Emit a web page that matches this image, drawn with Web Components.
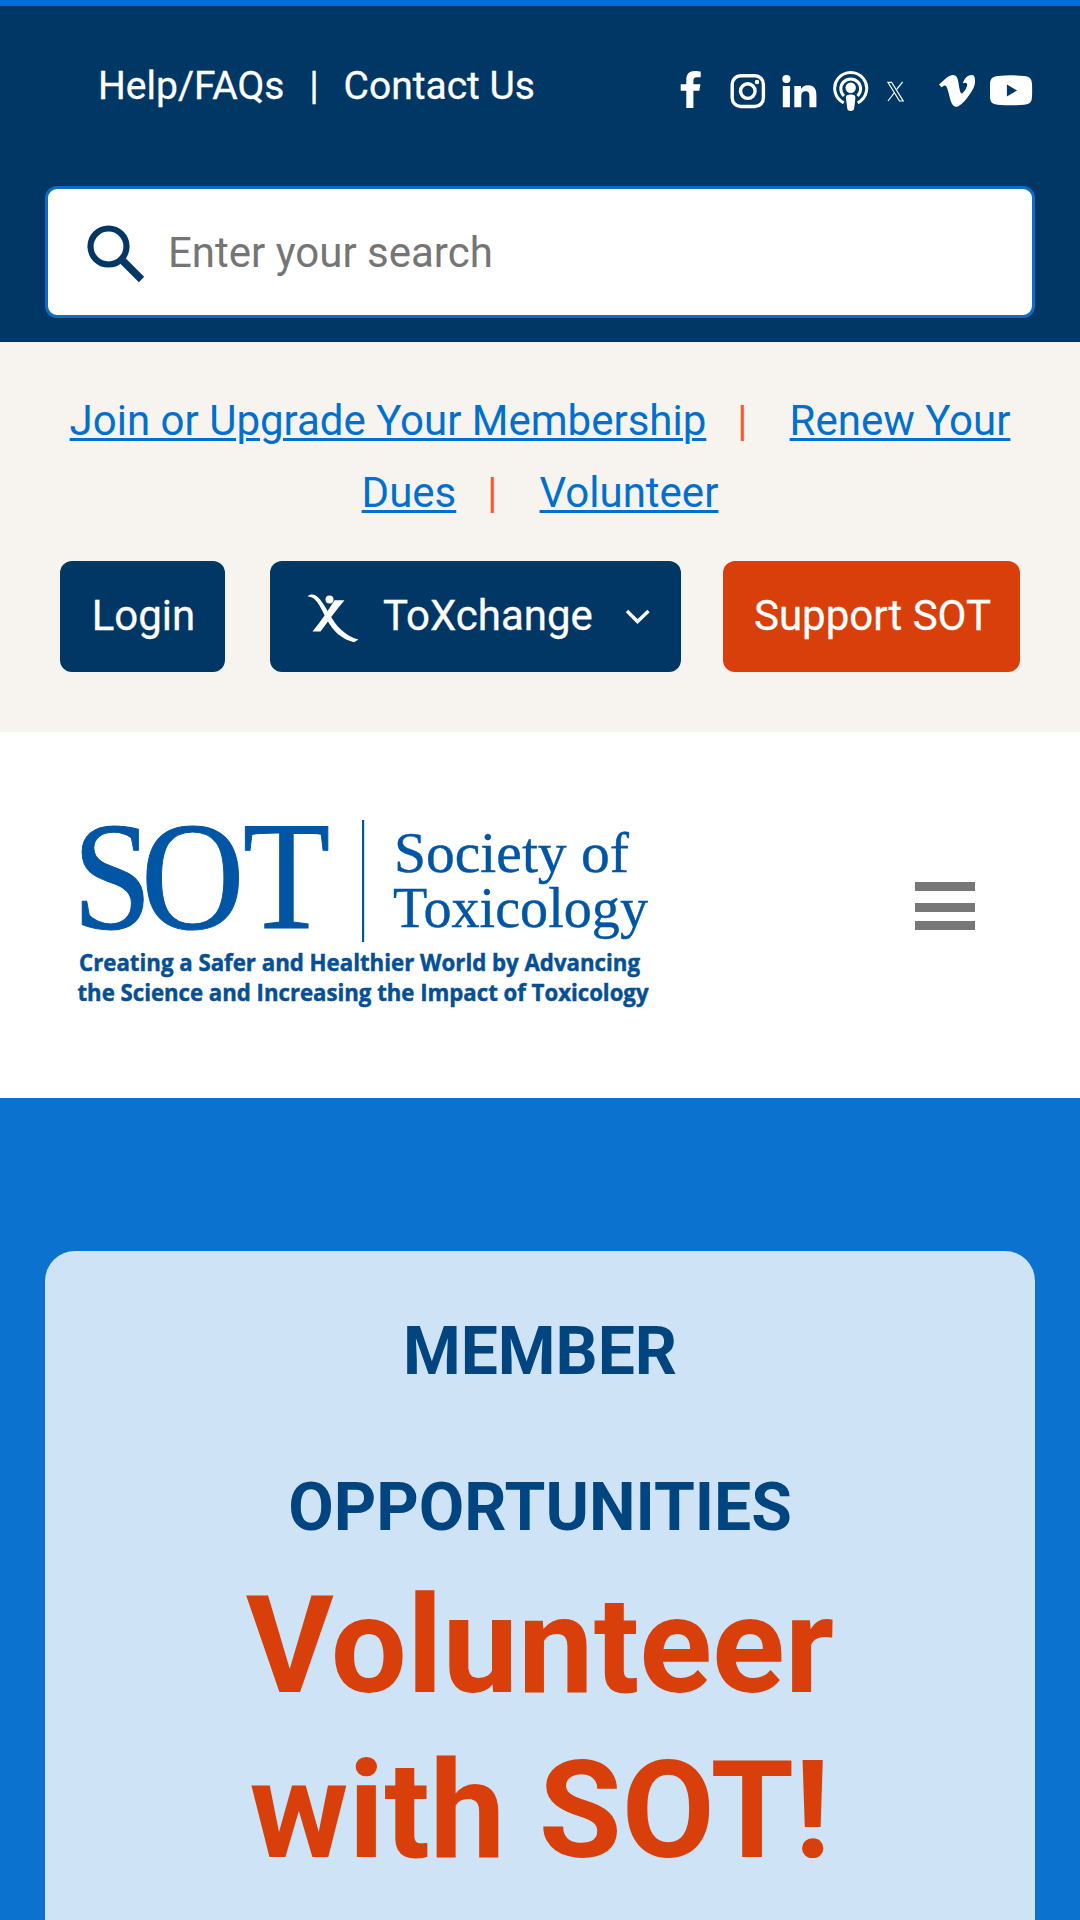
<!DOCTYPE html>
<html lang="en">
<head>
<meta charset="utf-8">
<title>Society of Toxicology</title>
<style>
  html, body { margin: 0; background: #fff; font-family: Roboto, "Liberation Sans", sans-serif; }
  body { width: 1080px; height: 1920px; overflow: hidden; }
</style>
</head>
<body>
<sot-page>
  <sot-topbar>
    <sot-toplinks slot="links"></sot-toplinks>
    <sot-social slot="social"></sot-social>
    <sot-search slot="search">Enter your search</sot-search>
  </sot-topbar>
  <sot-quicklinks>
    <sot-button slot="buttons" style="--w:165px;--pad:2px">Login</sot-button>
    <sot-button slot="buttons" style="--w:411px;--ml:45px;--justify:flex-start;--pad:37px">
      <svg slot="before" width="52" height="50" viewBox="307 593 52 50" fill="#fff" style="margin:2px 24px 0 0;display:block">
        <path d="M307.500 596.500C311 593 316 594.500 320 599.500C324 604.500 327 610 330 615C336 626 345 636 358.500 639.500L354 642.200C341 639 333 631 326.500 619C322 610 317.500 600 312 597.500C310 596.500 308.500 596.500 307.500 596.500Z"/>
        <path d="M334.500 600.200L344.500 600.200C336 610 329 620 320.500 631.600L312.500 631.600C320 622 328 611 334.500 600.200Z"/>
        <circle cx="329.500" cy="599.500" r="4"/>
      </svg>
      ToXchange
      <svg slot="after" width="26" height="18" viewBox="625 607 26 18" fill="none" stroke="#fff" stroke-width="3.400" style="margin:0 0 0 32px;display:block"><path d="M627 610L637.500 620.500L648.500 610"/></svg>
    </sot-button>
    <sot-button slot="buttons" style="--w:297px;--ml:42px;--bg:#d83f0a;--pad:2px">Support SOT</sot-button>
  </sot-quicklinks>
  <sot-masthead></sot-masthead>
  <sot-hero>
    <span slot="eyebrow">MEMBER<br>OPPORTUNITIES</span>
    <span slot="title">Volunteer<br>with SOT!</span>
  </sot-hero>
</sot-page>
<script>
const define = (name, html) => customElements.define(name, class extends HTMLElement {
  constructor() {
    super();
    const t = document.createElement('template');
    t.innerHTML = html;
    this.attachShadow({ mode: 'open' }).append(t.content.cloneNode(true));
  }
});

define('sot-page', `<style>:host{display:flex;flex-direction:column;width:1080px;height:1920px;overflow:hidden}</style><slot></slot>`);

define('sot-topbar', `<style>
  :host{display:flex;flex-direction:column;box-sizing:border-box;height:342px;flex:none;background:#003764;border-top:6px solid #0070d6;padding:56px 45px 0}
  .row{display:flex;justify-content:space-between;align-items:flex-start;height:124px;padding:0 0 0 53px;flex:none}
</style><div class="row"><slot name="links"></slot><slot name="social"></slot></div><slot name="search"></slot>`);

define('sot-toplinks', `<style>
  :host{display:flex;margin-top:1px;font-size:39px;line-height:46px;color:#fff;white-space:pre;-webkit-text-stroke:.3px #fff}
  a{color:inherit}
  .bar{width:59px;text-align:center}
</style><a>Help/FAQs</a><span class="bar">|</span><a>Contact Us</a>`);

define('sot-social', `<style>
  :host{display:flex;margin-top:6px;margin-right:2px}
  svg{display:block;height:44px;flex:none}
</style>
<svg width="22" viewBox="680 68 22 44" fill="#fff"><path d="M686.300 108V90.800H680.700V84.300H686.300V79.200C686.300 73.800 689.600 71 694.700 71C697.100 71 699.600 71.400 700.700 71.600V77.200H697.200C694.200 77.200 693.400 78.900 693.400 80.800V84.300H700.400L699.300 90.800H693.400V108Z"/></svg>
<svg width="36" viewBox="730 68 36 44" style="margin-left:28px" fill="none" stroke="#fff"><rect x="732.200" y="75.700" width="31.200" height="30.800" rx="8.500" stroke-width="3.400"/><circle cx="747.800" cy="91.100" r="7.300" stroke-width="3.400"/><circle cx="757" cy="82" r="2.200" fill="#fff" stroke="none"/></svg>
<svg width="35" viewBox="782 68 35 44" style="margin-left:16px" fill="#fff"><circle cx="786.400" cy="79" r="4.100"/><path d="M782.800 86H789.900V107.200H782.800ZM794.300 86H801V89C802.300 86.700 804.800 85.300 808 85.300C814.800 85.300 816.400 89.600 816.400 95.500V107.200H809.400V96.800C809.400 94 809.200 91.300 805.600 91.300C802 91.300 801.300 94 801.300 96.600V107.200H794.300Z"/></svg>
<svg width="36" viewBox="833 68 36 44" style="margin-left:16px" fill="none" stroke="#fff" stroke-width="3"><path d="M843.700 102.800A16 16 0 1 1 857.700 102.800"/><path d="M843.900 96A9.900 9.900 0 1 1 857.500 96"/><circle cx="850.700" cy="87.700" r="5.200" fill="#fff" stroke="none"/><path d="M850.700 94.600C853.900 94.600 855.700 95.500 855.400 98.200L854.300 107.600C854 110.200 853 111.100 850.700 111.100C848.400 111.100 847.400 110.200 847.100 107.600L846 98.200C845.700 95.500 847.500 94.600 850.700 94.600Z" fill="#fff" stroke="none"/></svg>
<svg width="18" viewBox="887 68 18 44" style="margin-left:18px" fill="none" stroke="#fff" stroke-width="1.200"><path d="M887.900 82.300L899.500 101H903.200L891.600 82.300Z"/><path d="M902.600 82L896.700 89.300M894.500 92.500L888 101"/></svg>
<svg width="37" viewBox="939 68 37 44" style="margin-left:34px" fill="#fff"><path d="M974.900 83.100C974.700 86.500 972.400 91.100 967.800 96.900C963.100 103.200 959.100 106.700 955.800 106.700C953.800 106.700 952.100 104.800 950.700 101L947.900 90.500C946.900 86.700 945.900 85.500 944.700 85.500C944.300 85.500 943.200 86.100 941.500 87.200L939 84.400L946.300 78.100C949.200 75.700 951.300 75.200 952.700 75.100C955.700 74.900 957.500 76.900 958.200 81.300C959.600 89.500 960.300 93.600 961.600 93.600C963.300 93.600 966.900 87.900 967.100 85.100C967.300 82.500 965.300 82.200 962.900 83.300C964.600 77.800 967.900 75 972.300 75.100C974.300 75.200 975.400 77.700 974.900 83.100Z"/></svg>
<svg width="43" viewBox="990 68 43 44" style="margin-left:14px" fill="#fff"><path fill-rule="evenodd" d="M998 76Q1011 74.600 1024 76C1030 76.600 1031.700 79 1032 84Q1032.300 90.500 1032 97C1031.700 102 1030 104 1024.500 104.700Q1011 105.900 997.500 104.700C992 104 990.300 102 990 97Q989.700 90.500 990 84C990.300 79 992 76.600 998 76ZM1006.900 84.500V96.600L1017 90.500Z"/></svg>`);

define('sot-search', `<style>
  :host{display:flex;align-items:center;box-sizing:border-box;height:132px;flex:none;background:#fff;border:3px solid #0e6cc4;border-radius:12px;padding:2px 0 0 38px;font-size:42px;line-height:50px;color:#757575}
  svg{display:block;margin-right:22px}
</style><svg width="60" height="60" viewBox="86 223 60 60" fill="none" stroke="#003764"><circle cx="108.500" cy="246.500" r="18" stroke-width="6.200"/><path d="M123 261L141.500 279.500" stroke-width="7.500"/></svg><slot></slot>`);

define('sot-quicklinks', `<style>
  :host{display:flex;flex-direction:column;box-sizing:border-box;height:390px;flex:none;background:#f7f3ee;padding:43px 60px 0}
  p{margin:0 0 32px;font-size:42px;line-height:72px;text-align:center;color:#0070d0}
  a{text-decoration:underline;text-decoration-thickness:3px;text-underline-offset:3px}
  i{font-style:normal;color:#fa5a32;margin:0 42px 0 31px}
  div{display:flex}
</style><p><a>Join or Upgrade Your Membership</a><i>|</i><a>Renew Your<br>Dues</a><i>|</i><a>Volunteer</a></p><div><slot name="buttons"></slot></div>`);

define('sot-button', `<style>
  :host{display:flex;align-items:center;box-sizing:border-box;width:var(--w);height:111px;margin-left:var(--ml,0);padding-left:var(--pad,0);justify-content:var(--justify,center);background:var(--bg,#003764);color:#fff;border-radius:12px;font-size:42px;line-height:50px;-webkit-text-stroke:.3px #fff}
  span{margin-top:-2px}
</style><slot name="before"></slot><span><slot></slot></span><slot name="after"></slot>`);

define('sot-masthead', `<style>
  :host{display:flex;justify-content:space-between;box-sizing:border-box;height:366px;flex:none;background:#fff;padding:18px 105px 0 30px}
  .menu{display:flex;flex-direction:column;margin-top:132px;width:60px}
  .menu b{height:9px;background:#777}
  .menu b:nth-child(2){margin:12px 0 9px}
  svg{display:block}
</style>
<svg width="700" height="290" viewBox="30 750 700 290" fill="#0055a4">
  <g font-family="Liberation Serif, serif">
    <text y="928.500" font-size="154" x="78 151.500 261" transform="scale(.93 1)" stroke="#0055a4" stroke-width="1">SOT</text>
    <rect x="362" y="820" width="2.200" height="122"/>
    <g stroke="#0055a4" stroke-width=".4">
      <text x="394" y="872" font-size="58" textLength="235" lengthAdjust="spacingAndGlyphs">Society of</text>
      <text x="393" y="927" font-size="58" textLength="255" lengthAdjust="spacingAndGlyphs">Toxicology</text>
    </g>
  </g>
  <g font-family="Open Sans, Noto Sans, sans-serif" font-weight="700" font-size="24" fill="#054f94" stroke="#054f94" stroke-width=".5">
    <text x="79" y="971" textLength="561" lengthAdjust="spacingAndGlyphs">Creating a Safer and Healthier World by Advancing</text>
    <text x="77.500" y="1001" textLength="571" lengthAdjust="spacingAndGlyphs">the Science and Increasing the Impact of Toxicology</text>
  </g>
</svg>
<div class="menu"><b></b><b></b><b></b></div>`);

define('sot-hero', `<style>
  :host{display:flex;flex:1;background:#0b72d0;padding:153px 45px 0}
  section{flex:1;background:#cfe3f6;border-radius:30px 30px 0 0;text-align:center;font-weight:700;padding-top:23px}
  h2{margin:0;font-size:66px;line-height:156px;color:#00457f}
  h1{margin:0;font-size:134.800px;line-height:165px;color:#d83f0a;margin-top:-22px}
</style><section><h2><slot name="eyebrow"></slot></h2><h1><slot name="title"></slot></h1></section>`);
</script>
</body>
</html>
